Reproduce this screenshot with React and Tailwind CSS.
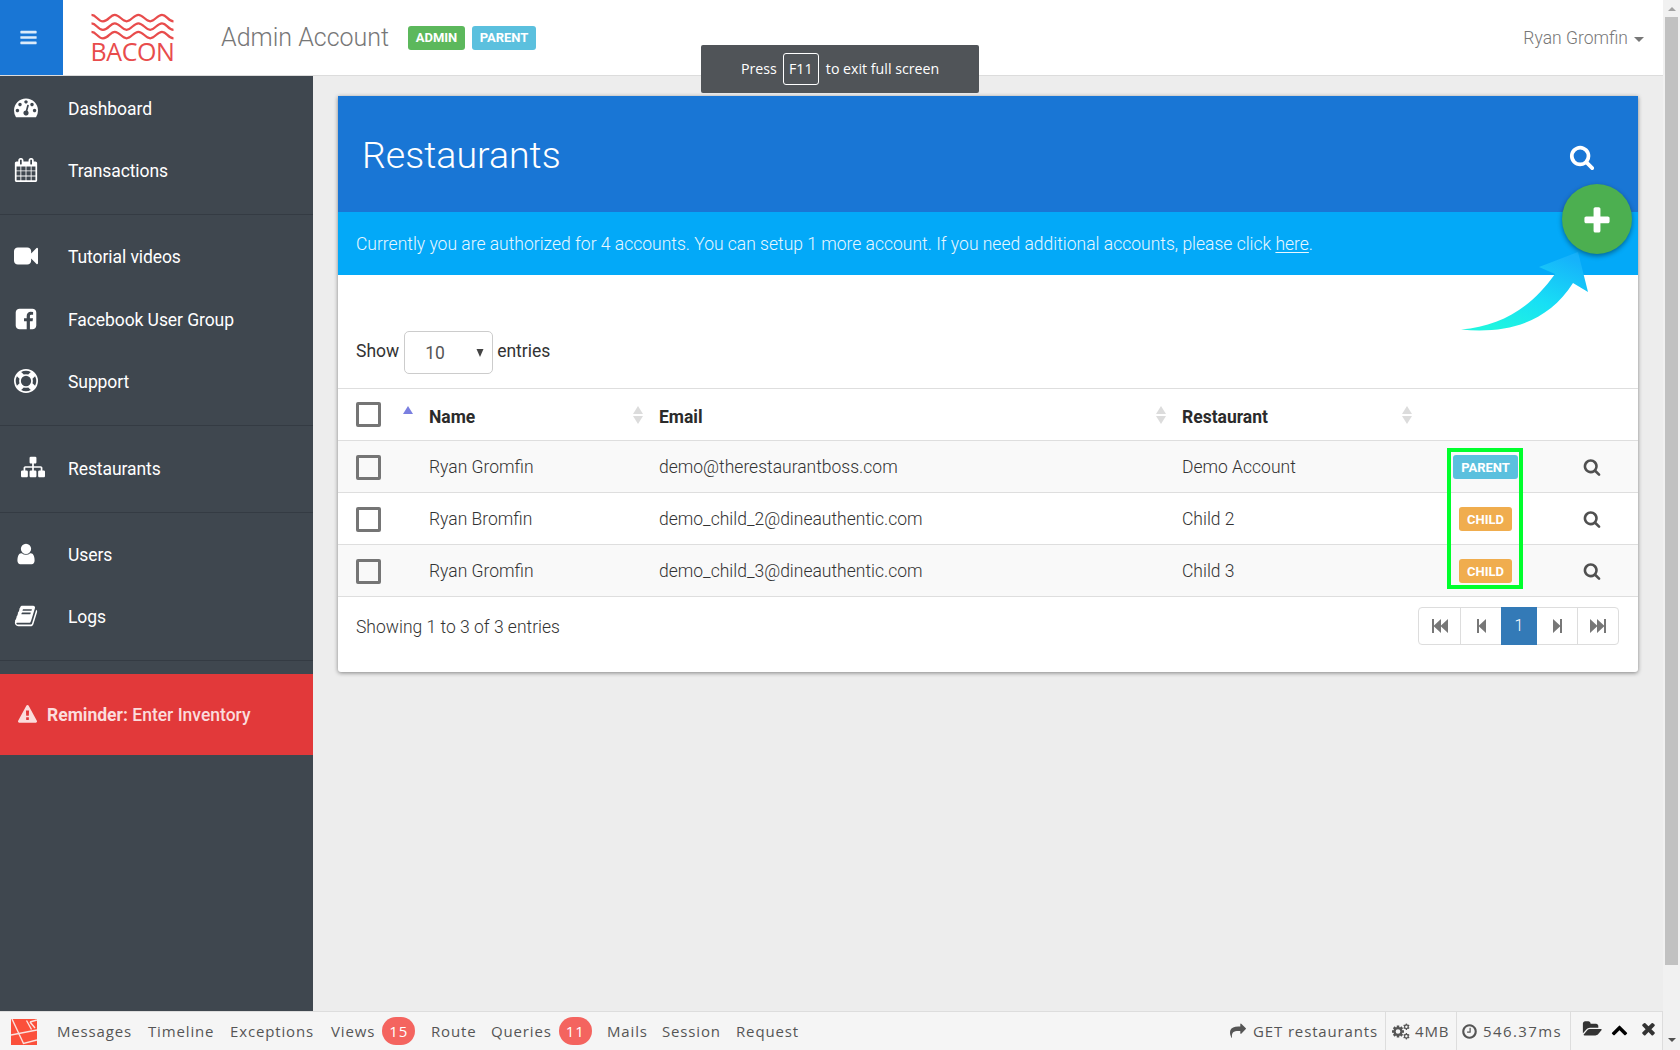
import { useState } from "react";

const ICONS = {
  bars: "M1664 1344v128q0 26-19 45t-45 19h-1408q-26 0-45-19t-19-45v-128q0-26 19-45t45-19h1408q26 0 45 19t19 45zm0-512v128q0 26-19 45t-45 19h-1408q-26 0-45-19t-19-45v-128q0-26 19-45t45-19h1408q26 0 45 19t19 45zm0-512v128q0 26-19 45t-45 19h-1408q-26 0-45-19t-19-45v-128q0-26 19-45t45-19h1408q26 0 45 19t19 45z",
  dashboard: "M384 1152q0-53-37.5-90.5t-90.5-37.5-90.5 37.5-37.5 90.5 37.5 90.5 90.5 37.5 90.5-37.5 37.5-90.5zm192-448q0-53-37.5-90.5t-90.5-37.5-90.5 37.5-37.5 90.5 37.5 90.5 90.5 37.5 90.5-37.5 37.5-90.5zm428 481l101-382q6-26-7.5-48.5t-38.5-29.5-48 6.5-30 39.5l-101 382q-60 5-107 43.5t-63 98.5q-20 77 20 146t117 89 146-20 89-117q16-60-6-117t-72-91zm660-33q0-53-37.5-90.5t-90.5-37.5-90.5 37.5-37.5 90.5 37.5 90.5 90.5 37.5 90.5-37.5 37.5-90.5zm-640-640q0-53-37.5-90.5t-90.5-37.5-90.5 37.5-37.5 90.5 37.5 90.5 90.5 37.5 90.5-37.5 37.5-90.5zm448 192q0-53-37.5-90.5t-90.5-37.5-90.5 37.5-37.5 90.5 37.5 90.5 90.5 37.5 90.5-37.5 37.5-90.5zm320 448q0 261-141 483-19 29-54 29h-1402q-35 0-54-29-141-221-141-483 0-182 71-348t191-286 286-191 348-71 348 71 286 191 191 286 71 348z",
  calendar: "M192 1664h288v-288h-288v288zm352 0h320v-288h-320v288zm-352-352h288v-320h-288v320zm352 0h320v-320h-320v320zm-352-384h288v-288h-288v288zm736 736h320v-288h-320v288zm-384-736h320v-288h-320v288zm768 736h288v-288h-288v288zm-384-352h320v-320h-320v320zm-352-864v-288q0-13-9.5-22.5t-22.5-9.5h-64q-13 0-22.5 9.5t-9.5 22.5v288q0 13 9.5 22.5t22.5 9.5h64q13 0 22.5-9.5t9.5-22.5zm736 864h288v-320h-288v320zm-384-384h320v-288h-320v288zm384 0h288v-288h-288v288zm32-480v-288q0-13-9.5-22.5t-22.5-9.5h-64q-13 0-22.5 9.5t-9.5 22.5v288q0 13 9.5 22.5t22.5 9.5h64q13 0 22.5-9.5t9.5-22.5zm384-64v1280q0 52-38 90t-90 38h-1408q-52 0-90-38t-38-90v-1280q0-52 38-90t90-38h128v-96q0-66 47-113t113-47h64q66 0 113 47t47 113v96h384v-96q0-66 47-113t113-47h64q66 0 113 47t47 113v96h128q52 0 90 38t38 90z",
  video: "M1792 352v1088q0 42-39 59-13 5-25 5-27 0-45-19l-403-403v166q0 119-84.5 203.5t-203.5 84.5h-704q-119 0-203.5-84.5t-84.5-203.5v-704q0-119 84.5-203.5t203.5-84.5h704q119 0 203.5 84.5t84.5 203.5v165l403-402q18-19 45-19 12 0 25 5 39 17 39 59z",
  facebook: "M1376 128q119 0 203.5 84.5t84.5 203.5v960q0 119-84.5 203.5t-203.5 84.5h-188v-595h199l30-232h-229v-148q0-56 23.5-84t91.5-28l122-1v-207q-63-9-178-9-136 0-217.5 80t-81.5 226v171h-200v232h200v595h-532q-119 0-203.5-84.5t-84.5-203.5v-960q0-119 84.5-203.5t203.5-84.5h960z",
  support: "M896 0q182 0 348 71t286 191 191 286 71 348-71 348-191 286-286 191-348 71-348-71-286-191-191-286-71-348 71-348 191-286 286-191 348-71zm0 128q-190 0-361 90l194 194q82-28 167-28t167 28l194-194q-171-90-361-90zm-678 1129l194-194q-28-82-28-167t28-167l-194-194q-90 171-90 361t90 361zm678 407q190 0 361-90l-194-194q-82 28-167 28t-167-28l-194 194q171 90 361 90zm0-384q159 0 271.5-112.5t112.5-271.5-112.5-271.5-271.5-112.5-271.5 112.5-112.5 271.5 112.5 271.5 271.5 112.5zm484-217l194 194q90-171 90-361t-90-361l-194 194q28 82 28 167t-28 167z",
  sitemap: "M1792 1248v320q0 40-28 68t-68 28h-320q-40 0-68-28t-28-68v-320q0-40 28-68t68-28h96v-192h-512v192h96q40 0 68 28t28 68v320q0 40-28 68t-68 28h-320q-40 0-68-28t-28-68v-320q0-40 28-68t68-28h96v-192h-512v192h96q40 0 68 28t28 68v320q0 40-28 68t-68 28h-320q-40 0-68-28t-28-68v-320q0-40 28-68t68-28h96v-192q0-52 38-90t90-38h512v-192h-96q-40 0-68-28t-28-68v-320q0-40 28-68t68-28h320q40 0 68 28t28 68v320q0 40-28 68t-68 28h-96v192h512q52 0 90 38t38 90v192h96q40 0 68 28t28 68z",
  user: "M1536 1399q0 109-62.5 187t-150.5 78h-854q-88 0-150.5-78t-62.5-187q0-85 8.5-160.5t31.5-152 58.5-131 94-89 134.5-34.5q131 128 313 128t313-128q76 0 134.5 34.5t94 89 58.5 131 31.5 152 8.5 160.5zm-256-887q0 159-112.5 271.5t-271.5 112.5-271.5-112.5-112.5-271.5 112.5-271.5 271.5-112.5 271.5 112.5 112.5 271.5z",
  book: "M1703 478q40 57 18 129l-275 906q-19 64-76.5 107.5t-122.5 43.5h-923q-77 0-148.5-53.5t-99.5-131.5q-24-67-2-127 0-4 3-27t4-37q1-8-3-21.5t-3-19.5q2-11 8-21t16.5-23.5 16.5-23.5q23-38 45-91.5t30-91.5q3-10 .5-30t-.5-28q3-11 17-28t17-23q21-36 42-92t25-90q1-9-2.5-32t.5-28q4-13 22-30.5t22-22.5q19-26 42.5-84.5t27.5-96.5q1-8-3-25.5t-2-26.5q2-8 9-18t18-23 17-21q8-12 16.5-30.5t15-35 16-36 19.5-32 26.5-23.5 36-11.5 47.5 5.5l-1 3q38-9 51-9h761q74 0 114 56t18 130l-274 906q-36 119-71.5 153.5t-128.5 34.5h-869q-27 0-38 15-11 16-1 43 24 70 144 70h923q29 0 56-15.5t35-41.5l300-987q7-22 5-57 38 15 59 43zm-1064 2q-4 13 2 22.5t20 9.5h608q13 0 25.5-9.5t16.5-22.5l21-64q4-13-2-22.5t-20-9.5h-608q-13 0-25.5 9.5t-16.5 22.5zm-83 256q-4 13 2 22.5t20 9.5h608q13 0 25.5-9.5t16.5-22.5l21-64q4-13-2-22.5t-20-9.5h-608q-13 0-25.5 9.5t-16.5 22.5z",
  warning: "M1024 1375v-190q0-14-9.5-23.5t-22.5-9.5h-192q-13 0-22.5 9.5t-9.5 23.5v190q0 14 9.5 23.5t22.5 9.5h192q13 0 22.5-9.5t9.5-23.5zm-2-374l18-459q0-12-10-19-13-11-24-11h-220q-11 0-24 11-10 7-10 21l17 457q0 10 10 16.5t24 6.5h185q14 0 23.5-6.5t10.5-16.5zm-14-934l768 1408q35 63-2 126-17 29-46.5 46t-63.5 17h-1536q-34 0-63.5-17t-46.5-46q-37-63-2-126l768-1408q17-31 47-49t65-18 65 18 47 49z",
  search: "M1216 832q0-185-131.5-316.5t-316.5-131.5-316.5 131.5-131.5 316.5 131.5 316.5 316.5 131.5 316.5-131.5 131.5-316.5zm512 832q0 52-38 90t-90 38q-54 0-90-38l-343-342q-179 124-399 124-143 0-273.5-55.5t-225-150-150-225-55.5-273.5 55.5-273.5 150-225 225-150 273.5-55.5 273.5 55.5 225 150 150 225 55.5 273.5q0 220-124 399l343 343q37 37 37 90z",
  plus: "M1600 736v192q0 40-28 68t-68 28h-416v416q0 40-28 68t-68 28h-192q-40 0-68-28t-28-68v-416h-416q-40 0-68-28t-28-68v-192q0-40 28-68t68-28h416v-416q0-40 28-68t68-28h192q40 0 68 28t28 68v416h416q40 0 68 28t28 68z",
  share: "M1792 640q0 26-19 45l-512 512q-19 19-45 19t-45-19-19-45v-256h-224q-98 0-175.5 6t-154 21.5-133 42.5-105.5 69.5-80 101-48.5 138.5-17.5 181q0 55 5 123 0 6 2.5 23.5t2.5 26.5q0 15-8.5 25t-23.5 10q-16 0-28-17-7-9-13-22t-13.5-30-10.5-24q-127-285-127-451 0-199 53-333 162-403 875-403h224v-256q0-26 19-45t45-19 45 19l512 512q19 19 19 45z",
  clock: "M1024 544v448q0 14-9 23t-23 9h-320q-14 0-23-9t-9-23v-64q0-14 9-23t23-9h224v-352q0-14 9-23t23-9h64q14 0 23 9t9 23zm416 352q0-148-73-273t-198-198-273-73-273 73-198 198-73 273 73 273 198 198 273 73 273-73 198-198 73-273zm224 0q0 209-103 385.5t-279.5 279.5-385.5 103-385.5-103-279.5-279.5-103-385.5 103-385.5 279.5-279.5 385.5-103 385.5 103 279.5 279.5 103 385.5z",
  folder: "M1943 952q0 31-31 66l-336 396q-43 51-120.5 86.5t-143.5 35.5h-1088q-34 0-60.5-13t-26.5-43q0-31 31-66l336-396q43-51 120.5-86.5t143.5-35.5h1088q34 0 60.5 13t26.5 43zm-343-344v160h-832q-94 0-197 47.5t-164 119.5l-337 396-5 6q0-4-.5-12.5t-.5-12.5v-960q0-92 66-158t158-66h320q92 0 158 66t66 158v32h544q92 0 158 66t66 158z",
  up: "M1683 1331l-166 165q-19 19-45 19t-45-19l-531-531-531 531q-19 19-45 19t-45-19l-166-165q-19-19-19-45.5t19-45.5l742-741q19-19 45-19t45 19l742 741q19 19 19 45.5t-19 45.5z",
  close: "M1490 1322q0 40-28 68l-136 136q-28 28-68 28t-68-28l-294-294-294 294q-28 28-68 28t-68-28l-136-136q-28-28-28-68t28-68l294-294-294-294q-28-28-28-68t28-68l136-136q28-28 68-28t68 28l294 294 294-294q28-28 68-28t68 28l136 136q28 28 28 68t-28 68l-294 294 294 294q28 28 28 68z",
};

function Icon({ name, className }) {
  return (
    <svg viewBox={name === "folder" ? "0 0 1944 1792" : "0 0 1792 1792"} fill="currentColor" className={`shrink-0 ${className}`}>
      <path d={ICONS[name]} />
    </svg>
  );
}

// gear with a round hole, r = outer radius
function Gear({ cx, cy, r, teeth }) {
  const w = r * 0.42;
  return (
    <g>
      {Array.from({ length: teeth }, (_, i) => (
        <rect key={i} x={cx - w / 2} y={cy - r} width={w} height={r * 0.5} fill="currentColor" transform={`rotate(${(360 / teeth) * i} ${cx} ${cy})`} />
      ))}
      <circle cx={cx} cy={cy} r={r * 0.58} fill="none" stroke="currentColor" strokeWidth={r * 0.38} />
    </g>
  );
}

function Cogs() {
  return (
    <svg viewBox="0 0 18 17" className="w-[18px] h-[17px] shrink-0">
      <Gear cx={6} cy={8.5} r={6} teeth={8} />
      <Gear cx={14.4} cy={3.8} r={3.2} teeth={6} />
      <Gear cx={14.4} cy={13.2} r={3.2} teeth={6} />
    </svg>
  );
}

function Logo() {
  return (
    <div className="w-[83px] flex flex-col items-center text-[#e84c4c]">
      <svg viewBox="0 0 83 28" className="w-[83px] h-[28px]" fill="none" stroke="currentColor" strokeWidth="2.2">
        {[1.8, 10.3, 18.8].map((y) => (
          <path key={y} d={`M0.500 ${y}c5 0 6 6.500 11.500 6.500s7-6.500 11.800-6.500s7 6.500 11.800 6.500s7-6.500 11.800-6.500s7 6.500 11.800 6.500s7-6.500 11.800-6.500s6 6.500 11.500 6.500`} />
        ))}
      </svg>
      <span className="-mt-px font-['Open_Sans',sans-serif] text-[25px] leading-[22px] tracking-[-0.4px]">BACON</span>
    </div>
  );
}

function Badge({ color, children }) {
  return (
    <span className={`inline-flex items-center justify-center h-6 rounded-[3px] text-[13px] font-bold text-white leading-none ${color}`}>
      {children}
    </span>
  );
}

const menu = [
  [
    { icon: "dashboard", label: "Dashboard" },
    { icon: "calendar", label: "Transactions" },
  ],
  [
    { icon: "video", label: "Tutorial videos" },
    { icon: "facebook", label: "Facebook User Group" },
    { icon: "support", label: "Support" },
  ],
  [{ icon: "sitemap", label: "Restaurants" }],
  [
    { icon: "user", label: "Users" },
    { icon: "book", label: "Logs" },
  ],
];

function Sidebar() {
  return (
    <aside className="w-[313px] shrink-0 bg-[#3f474f] pt-px text-white">
      {menu.map((group, i) => (
        <div key={i}>
          {group.map((item) => (
            <a key={item.label} className="flex items-center h-[62.5px] text-[17.5px] tracking-[-0.08px]">
              <span className={`flex w-[68px] pb-0.5 ${item.icon === "sitemap" ? "pl-[21px]" : "pl-3.5"}`}>
                <Icon name={item.icon} className="size-6" />
              </span>
              <span className="pt-px">{item.label}</span>
            </a>
          ))}
          <div className="mt-3 mb-[10.75px] h-px bg-[#343b43]" />
        </div>
      ))}
      <div className="mt-[13px] flex items-center h-[81px] bg-[#e2393a] pl-[18px] text-[17.5px] font-bold text-[#fbdcdc]">
        <Icon name="warning" className="size-[19px] mr-2.5" />
        Reminder:&nbsp;<span className="font-medium">Enter Inventory</span>
      </div>
    </aside>
  );
}

function SortIcon() {
  return (
    <svg viewBox="0 0 10 18" className="w-2.5 h-[18px]" fill="#dcdcdc">
      <path d="M5 0l5 8H0zM5 18l5-8H0z" />
    </svg>
  );
}

function Checkbox() {
  return <span className="block size-[25px] rounded-[2px] border-[3px] border-[#757575]" />;
}

const rows = [
  { name: "Ryan Gromfin", email: "demo@therestaurantboss.com", restaurant: "Demo Account", type: "PARENT" },
  { name: "Ryan Bromfin", email: "demo_child_2@dineauthentic.com", restaurant: "Child 2", type: "CHILD" },
  { name: "Ryan Gromfin", email: "demo_child_3@dineauthentic.com", restaurant: "Child 3", type: "CHILD" },
];

function Table() {
  return (
    <div className="relative">
      <div className="grid grid-cols-[47px_26px_230px_523px_246px_130px_1fr] items-center h-[53px] border-y border-[#dedede] pl-[18px] font-bold text-[#2b2b2b]">
        <Checkbox />
        <svg viewBox="0 0 10 8" className="w-2.5 h-2 mb-2.5" fill="#7a7fe0">
          <path d="M5 0l5 8H0z" />
        </svg>
        <span className="flex items-center justify-between pr-4"><span className="pt-[5px]">Name</span><SortIcon /></span>
        <span className="flex items-center justify-between pr-4"><span className="pt-[5px]">Email</span><SortIcon /></span>
        <span className="flex items-center justify-between pr-4"><span className="pt-[5px]">Restaurant</span><SortIcon /></span>
      </div>
      {rows.map((row, i) => (
        <div key={i} className={`grid grid-cols-[73px_230px_523px_245px_117px_1fr] items-center h-[52px] border-b border-[#dedede] pl-[18px] pt-px font-light text-[#333] ${i % 2 ? "bg-white" : "bg-[#f9f9f9]"}`}>
          <Checkbox />
          <span>{row.name}</span>
          <span>{row.email}</span>
          <span>{row.restaurant}</span>
          <span className="flex justify-center">
            <Badge color={row.type === "PARENT" ? "bg-[#5bc0de] w-[65px]" : "bg-[#f0ad4e] w-[53px]"}>{row.type}</Badge>
          </span>
          <span className="pl-[39px] text-[#505050]"><Icon name="search" className="size-[18px]" /></span>
        </div>
      ))}
      <div className="absolute left-[1109px] top-[60px] w-[76px] h-[141px] border-4 border-[#00ff2c]" />
    </div>
  );
}

// bar + triangles for first/prev/next/last
function StepIcon({ double, flip }) {
  return (
    <svg viewBox={double ? "0 0 16 14" : "0 0 9 14"} className={`h-3.5 ${double ? "w-4" : "w-[9px]"} ${flip ? "-scale-x-100" : ""}`} fill="#777">
      <path d={double ? "M0 0h2v6.500l7-6.500v6.500l7-6.500v14l-7-6.500v6.500l-7-6.500v6.500h-2z" : "M0 0h2v6.500l7-6.500v14l-7-6.500v6.500h-2z"} />
    </svg>
  );
}

function Pagination() {
  return (
    <div className="flex h-[38px] rounded-[4px] border border-[#ddd] text-[16px] font-light">
      <span className="flex w-[42px] items-center justify-center border-r border-[#ddd]"><StepIcon double /></span>
      <span className="flex w-10 items-center justify-center"><StepIcon /></span>
      <span className="-my-px flex w-9 items-center justify-center bg-[#337ab7] text-white">1</span>
      <span className="flex w-[41px] items-center justify-center border-r border-[#ddd]"><StepIcon flip /></span>
      <span className="flex w-10 items-center justify-center"><StepIcon double flip /></span>
    </div>
  );
}

function Arrow() {
  return (
    <svg viewBox="0 0 128 80" className="absolute left-[1123px] top-[155px] w-32 h-20">
      <defs>
        <linearGradient id="arrow" x1="0.3" y1="1" x2="0.9" y2="0.1">
          <stop offset="0" stopColor="#1ff5e0" />
          <stop offset="0.45" stopColor="#18dff5" />
          <stop offset="1" stopColor="#16b2fb" />
        </linearGradient>
      </defs>
      <path d="M0 78.500C40 75 70 57 94 23L78 16L117 1L127 41L112 32C87 71 48 83 0 78.500z" fill="url(#arrow)" />
    </svg>
  );
}

function RestaurantsCard() {
  return (
    <section className="relative w-[1300px] h-[576px] rounded-b-[3px] bg-white text-[17.5px] shadow-[0_1px_4px_rgba(0,0,0,0.45)]">
      <div className="flex h-[116px] items-center justify-between bg-[#1976d5] pl-6 pr-[43px] text-white">
        <h1 className="text-[37.5px] font-light leading-none pt-1">Restaurants</h1>
        <Icon name="search" className="size-[26px] mt-1.5" />
      </div>
      <div className="flex h-[63px] items-center bg-[#03a9f8] pl-[18px] pt-0.5 font-light text-[#e8f7ff]">
        Currently you are authorized for 4 accounts. You can setup 1 more account. If you need additional accounts, please click&nbsp;
        <a className="underline underline-offset-2">here</a>.
      </div>
      <div className="flex h-[113px] items-end pb-3.5 pl-[18px] text-[#333]">
        <span className="h-9">Show</span>
        <div className="ml-[5px] mr-1 flex h-[43px] w-[89px] items-center justify-between rounded-[5px] border border-[#ccc] pl-5 pr-2 text-[#555]">
          <span className="pt-0.5">10</span>
          <svg viewBox="0 0 8 8" className="size-2" fill="#444"><path d="M0.500 0h7l-3.500 8z" /></svg>
        </div>
        <span className="h-9">entries</span>
      </div>
      <Table />
      <div className="flex items-start justify-between pl-[18px] pr-[19px] pt-2.5 font-light text-[#333]">
        <span className="pt-[7px]">Showing 1 to 3 of 3 entries</span>
        <Pagination />
      </div>
      <Arrow />
      <button className="absolute left-[1224px] top-[88px] flex size-[70px] items-center justify-center rounded-full bg-[#4caf50] text-white shadow-[0_2px_5px_rgba(0,0,0,0.4)]">
        <Icon name="plus" className="size-8 mt-1" />
      </button>
    </section>
  );
}

function Header() {
  return (
    <header className="flex h-[76px] items-center border-b border-[#dcdcdc] bg-white">
      <button className="flex h-[75px] w-[63px] items-center justify-center self-start bg-[#1976d5] pr-[7px] text-[#dcebfa]">
        <Icon name="bars" className="size-[19px]" />
      </button>
      <div className="ml-7"><Logo /></div>
      <h2 className="ml-[47px] w-[187px] pt-px text-[25px] font-light text-[#777]">Admin Account</h2>
      <Badge color="bg-[#5cb85c] w-[57px]">ADMIN</Badge>
      <span className="w-[7px]" />
      <Badge color="bg-[#5bc0de] w-16">PARENT</Badge>
      <div className="ml-auto flex items-center pr-[19px] pt-0.5 text-[17.5px] font-light text-[#777]">
        Ryan Gromfin
        <svg viewBox="0 0 10 5" className="ml-1.5 mt-0.5 w-2.5 h-[5px]" fill="#777"><path d="M0 0h10l-5 5z" /></svg>
      </div>
    </header>
  );
}

function FullscreenToast() {
  return (
    <div className="absolute left-[701px] top-[45px] flex h-12 w-[278px] items-center rounded-[2px] bg-[#505458] pl-10 font-['Open_Sans','Noto_Sans',sans-serif] text-[14.2px] text-white">
      Press
      <kbd className="ml-1.5 mr-[7px] flex h-8 w-9 items-center justify-center rounded-[3px] border border-white font-['Open_Sans','Noto_Sans',sans-serif]">F11</kbd>
      to exit full screen
    </div>
  );
}

function Count({ children }) {
  return <span className="ml-[7px] flex h-7 w-[33px] items-center justify-center rounded-full bg-[#f4645f] text-white">{children}</span>;
}

function DebugBar() {
  return (
    <footer className="flex h-[39px] items-center border-t border-[#ddd] bg-[#f5f5f5] font-['Open_Sans','Noto_Sans',sans-serif] text-[15px] tracking-[0.85px] text-[#555]">
      <svg viewBox="0 0 26 26" className="ml-[11px] mr-5 mt-0.5 size-[26px] shrink-0">
        <rect width="26" height="26" fill="#fb503b" />
        <path d="M1 0l11.500 24.500l13.500-3.500M0 16l26-5M15.500 1.500l5 9M19 3l7-2M19 3l5 6" fill="none" stroke="#fbe3df" strokeWidth="1.400" />
      </svg>
      <nav className="grid grid-cols-[91px_82px_101px_100px_60px_116px_55px_74px_auto] items-center whitespace-nowrap">
        <span>Messages</span>
        <span>Timeline</span>
        <span>Exceptions</span>
        <span className="flex items-center">Views<Count>15</Count></span>
        <span>Route</span>
        <span className="flex items-center">Queries<Count>11</Count></span>
        <span>Mails</span>
        <span>Session</span>
        <span>Request</span>
      </nav>
      <div className="ml-auto flex h-full items-center">
        <span className="flex items-center pr-[7px]"><Icon name="share" className="size-4 mr-[7px]" />GET restaurants</span>
        <span className="flex h-full w-[71px] items-center border-l border-[#ddd] pl-1.5"><Cogs /><span className="ml-[5px]">4MB</span></span>
        <span className="flex h-full w-[114px] items-center border-l border-[#ddd] pl-1"><Icon name="clock" className="size-[17px] mr-[5px]" /><span className="tracking-[1.4px]">546.37ms</span></span>
        <span className="flex h-full w-[93px] items-start border-x border-[#ddd] pl-[11px] pt-2 text-[#333]">
          <Icon name="folder" className="h-[18px] w-5" />
          <Icon name="up" className="ml-[9px] mt-px size-[17px] text-black" />
          <Icon name="close" className="ml-[11px] -mt-px size-[19px]" />
        </span>
      </div>
    </footer>
  );
}

function Scrollbar() {
  return (
    <div className="flex w-[17px] shrink-0 flex-col items-center justify-between bg-[#f1f1f1]">
      <div className="flex h-[965px] w-full flex-col items-center">
        <svg viewBox="0 0 8 4" className="mb-[6px] mt-[7px] h-1 w-2 shrink-0" fill="#a3a3a3"><path d="M0 4h8l-4-4z" /></svg>
        <div className="w-[13px] flex-1 bg-[#c1c1c1]" />
      </div>
      <svg viewBox="0 0 8 4" className="mb-2 h-1 w-2" fill="#505050"><path d="M0 0h8l-4 4z" /></svg>
    </div>
  );
}

export default function App() {
  const [showToast] = useState(true);

  return (
    <div className="relative flex h-[1050px] w-[1680px] overflow-hidden bg-[#ededed] font-[Roboto,sans-serif]">
      <div className="flex w-[1663px] flex-col">
        <Header />
        <div className="flex flex-1">
          <Sidebar />
          <main className="pl-[25px] pt-5"><RestaurantsCard /></main>
        </div>
        <DebugBar />
      </div>
      <Scrollbar />
      {showToast && <FullscreenToast />}
    </div>
  );
}
